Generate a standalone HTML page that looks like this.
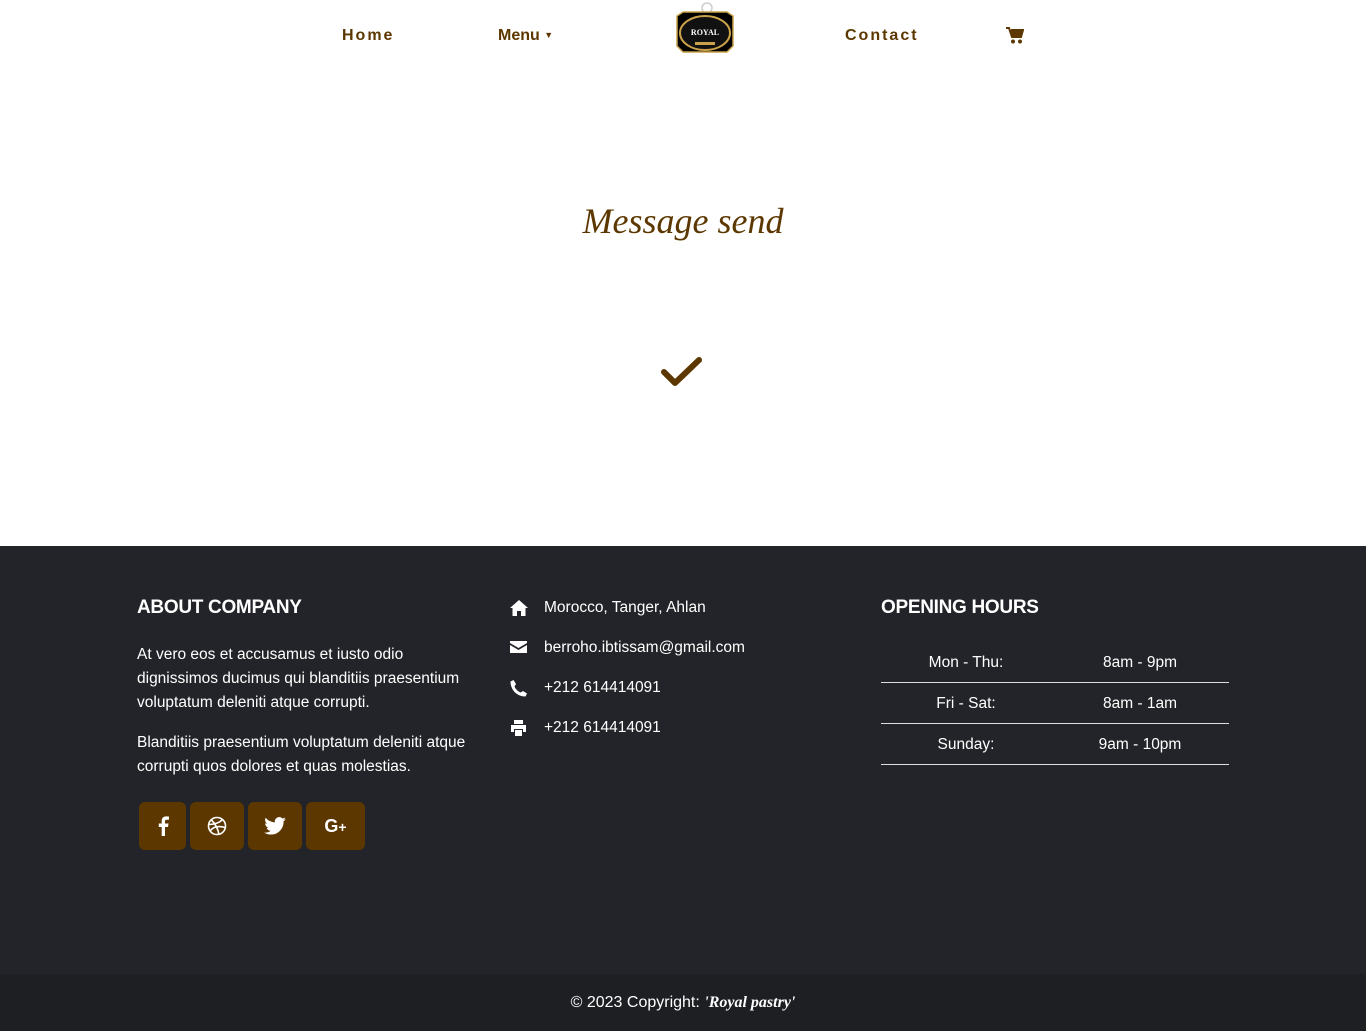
<!DOCTYPE html>
<html><head><meta charset="utf-8"><style>
*{margin:0;padding:0;box-sizing:border-box}
body{width:1366px;height:1031px;font-family:"Liberation Sans",sans-serif;background:#fff;position:relative;overflow:hidden}
.nav a{position:absolute;top:27px;color:#5c3700;font-weight:bold;font-size:16px;text-decoration:none}
.foot{position:absolute;left:0;top:546px;width:1366px;height:428px;background:#232429;color:#fff}
.bot{position:absolute;left:0;top:974px;width:1366px;height:57px;background:#1e1f23;color:#fff;font-size:16px;text-align:center;line-height:58px}
h3{position:absolute;font-size:19px;font-weight:bold;color:#fff;white-space:nowrap;letter-spacing:-0.3px}
.p{position:absolute;left:137px;width:350px;font-size:15.5px;line-height:24px}
.ci{position:absolute;left:510px;font-size:15.5px}
.ci svg{position:absolute;left:0;top:1px}
.ci span{position:absolute;left:34px;white-space:nowrap}
.row{position:absolute;left:881px;width:348px;height:41px;border-bottom:1px solid #ddd;font-size:15.5px}
.row span{position:absolute;top:12px;width:170px;text-align:center}
.sb{position:absolute;top:802px;height:48px;background:#5c3700;border-radius:6px}
.sb svg{position:absolute;left:50%;top:50%;transform:translate(-50%,-50%)}
</style></head><body>
<div class="nav">
<a style="left:342px;letter-spacing:2px">Home</a>
<a style="left:498px">Menu <span style="font-size:9px;vertical-align:2px">▼</span></a>
<a style="left:845px;letter-spacing:2px">Contact</a>
</div>
<svg style="position:absolute;left:673px;top:2px" width="64" height="54" viewBox="0 0 64 54">
<circle cx="34" cy="6" r="5" fill="none" stroke="#ccc" stroke-width="1.5"/>
<path d="M4 14l6-4h44l6 4v30l-6 6H10l-6-6z" fill="#000" stroke="#c9a24a" stroke-width="1.5"/>
<ellipse cx="32" cy="31" rx="25" ry="17" fill="#111" stroke="#c9a24a" stroke-width="2"/>
<text x="32" y="33" text-anchor="middle" font-size="8" fill="#fff" font-family="Liberation Serif" font-weight="bold">ROYAL</text>
<rect x="22" y="40" width="20" height="3" fill="#c9a24a"/>
</svg>
<svg style="position:absolute;left:1006px;top:27px" width="18" height="17" viewBox="0 0 18 17"><path d="M0 1h3l3 9h9l2-7H5" fill="#5c3700" stroke="#5c3700" stroke-width="2"/><circle cx="7" cy="14.5" r="2" fill="#5c3700"/><circle cx="14" cy="14.5" r="2" fill="#5c3700"/></svg>
<div style="position:absolute;left:0;width:1366px;top:200px;text-align:center;font-family:'Liberation Serif',serif;font-style:italic;font-size:36px;color:#5c3700">Message send</div>
<svg style="position:absolute;left:659px;top:356px" width="45" height="32" viewBox="0 0 45 32"><path d="M5 16l11 11L40 4" fill="none" stroke="#5c3700" stroke-width="6" stroke-linecap="round" stroke-linejoin="round"/></svg>
<div class="foot"></div>
<div style="position:absolute;left:0;top:0;color:#fff">
<h3 style="left:137px;top:597px">ABOUT COMPANY</h3>
<div class="p" style="top:643px">At vero eos et accusamus et iusto odio dignissimos ducimus qui blanditiis praesentium voluptatum deleniti atque corrupti.</div>
<div class="p" style="top:731px">Blanditiis praesentium voluptatum deleniti atque corrupti quos dolores et quas molestias.</div>
<div class="sb" style="left:139px;width:47px"><svg width="12" height="20" viewBox="0 0 12 20"><path d="M8 20V11h3l.5-3.5H8V5.5c0-1 .3-1.7 1.8-1.7H12V.6C11.5.5 10.4.4 9.2.4 6.6.4 4.7 2 4.7 4.9v2.6H1.8V11h2.9v9z" fill="#fff"/></svg></div>
<div class="sb" style="left:190px;width:54px"><svg width="20" height="20" viewBox="0 0 20 20" fill="none" stroke="#fff" stroke-width="1.6"><circle cx="10" cy="10" r="8.5"/><path d="M4 3.5c4 4 7 9 8 15M1.8 8.5c5 0 11-1.5 14-5.5M3 15c3-4 8-5.5 15-3.5"/></svg></div>
<div class="sb" style="left:248px;width:54px"><svg width="22" height="18" viewBox="0 0 24 20"><path d="M24 2.4c-.9.4-1.8.6-2.8.8 1-.6 1.8-1.6 2.2-2.7-1 .6-2 1-3.1 1.2A4.9 4.9 0 0 0 11.9 6C7.8 5.8 4.2 3.9 1.7.9c-1.4 2.3-.6 5.200 1.5 6.6-.8 0-1.6-.2-2.2-.6 0 2.4 1.7 4.4 3.9 4.9-.7.2-1.5.2-2.2.1.6 2 2.5 3.4 4.6 3.4A9.9 9.9 0 0 1 0 17.3 14 14 0 0 0 7.5 19.5c9.1 0 14.3-7.7 14-14.7 1-.7 1.8-1.5 2.5-2.4z" fill="#fff"/></svg></div>
<div class="sb" style="left:306px;width:59px"><span style="position:absolute;left:0;right:0;top:14px;text-align:center;font-weight:bold;font-size:18px">G<span style="font-size:14px">+</span></span></div>
<div class="ci" style="top:599px"><svg width="18" height="16" viewBox="0 0 18 16"><path d="M9 0L0 8h2.5v8h4.5v-5h4v5h4.5V8H18z" fill="#fff"/></svg><span>Morocco, Tanger, Ahlan</span></div>
<div class="ci" style="top:639px"><svg width="17" height="14" viewBox="0 0 17 14"><path d="M0 1h17v2L8.5 8 0 3z" fill="#fff"/><path d="M0 5l8.5 5L17 5v8H0z" fill="#fff"/></svg><span>berroho.ibtissam@gmail.com</span></div>
<div class="ci" style="top:679px"><svg width="17" height="17" viewBox="0 0 17 17"><path d="M3.5 0L6 4 4.5 6.5c1 2.5 3.3 4.8 6 6L13 11l4 2.5-1.5 3C7 16.5.5 10 .5 1.5z" fill="#fff"/></svg><span>+212 614414091</span></div>
<div class="ci" style="top:719px"><svg width="17" height="17" viewBox="0 0 17 17"><path d="M4 0h9v4H4zM1 5h15v7h-3v-3H4v3H1zM5 10h7v6H5z" fill="#fff"/></svg><span>+212 614414091</span></div>
<h3 style="left:881px;top:597px">OPENING HOURS</h3>
<div class="row" style="top:642px"><span style="left:0">Mon - Thu:</span><span style="left:174px">8am - 9pm</span></div>
<div class="row" style="top:683px"><span style="left:0">Fri - Sat:</span><span style="left:174px">8am - 1am</span></div>
<div class="row" style="top:724px"><span style="left:0">Sunday:</span><span style="left:174px">9am - 10pm</span></div>
</div>
<div class="bot">© 2023 Copyright: <i style="font-family:'Liberation Serif',serif;font-weight:bold">'Royal pastry'</i></div>
</body></html>
